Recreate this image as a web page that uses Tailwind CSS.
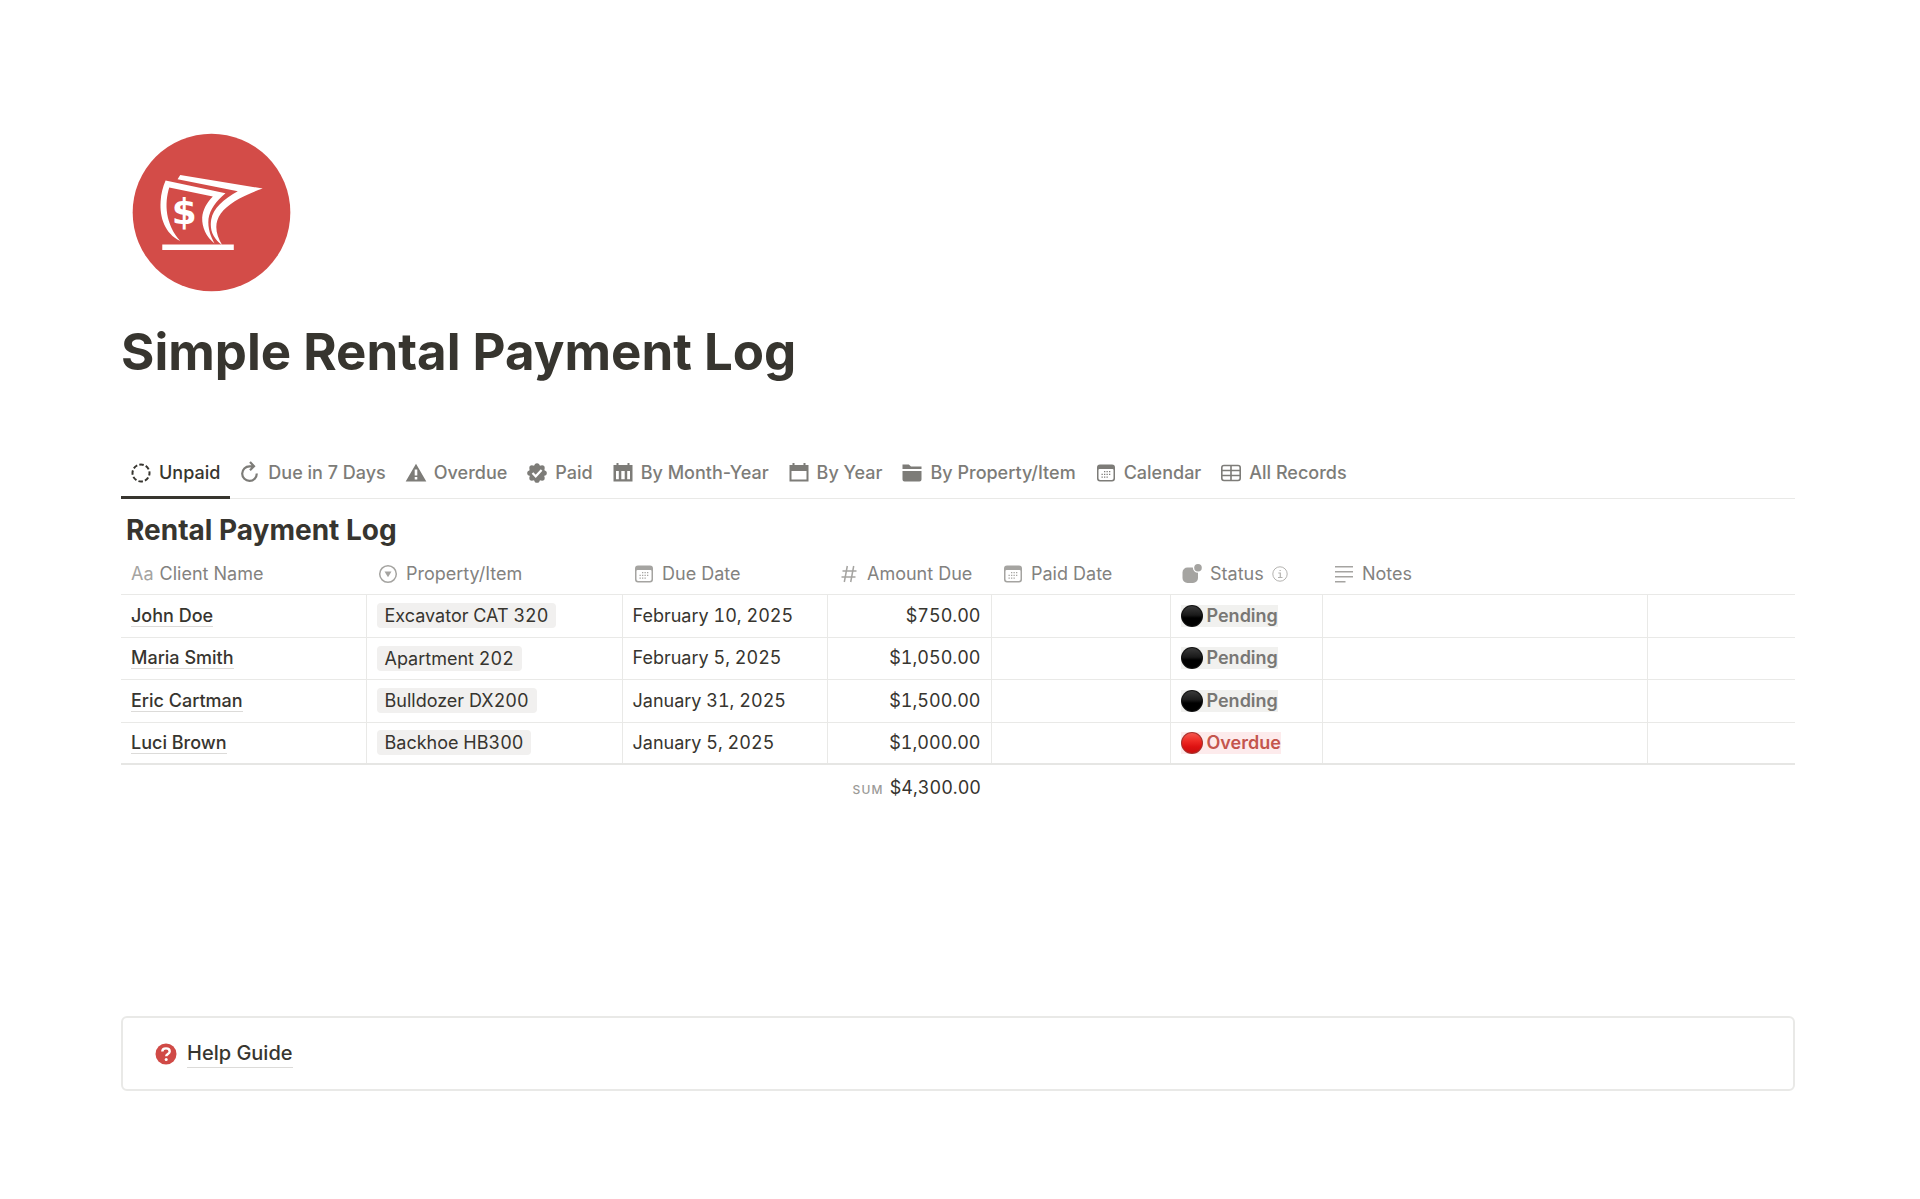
<!DOCTYPE html>
<html lang="en">
<head>
    <meta charset="UTF-8">
    <meta name="viewport" content="width=device-width, initial-scale=1.0">
    <title>Simple Rental Payment Log</title>
    <script src="https://cdn.jsdelivr.net/npm/@tailwindcss/browser@4"></script>
</head>
<body class="bg-white font-['Inter',sans-serif] text-[18px] leading-6 text-[#37352f]">

<!-- Shared icons -->
<svg class="absolute size-0" aria-hidden="true">
    <symbol id="icon-calendar" viewBox="0 0 20 20">
        <path fill-rule="evenodd" fill="currentColor" d="M4 1.500h12A3 3 0 0 1 19 4.500v11a3 3 0 0 1-3 3H4a3 3 0 0 1-3-3v-11a3 3 0 0 1 3-3ZM2.500 7v8.300A1.700 1.700 0 0 0 4.200 17h11.600a1.700 1.700 0 0 0 1.700-1.700V7a1 1 0 0 0-1-1h-13a1 1 0 0 0-1 1Z"/>
        <g fill="currentColor">
            <path d="M8 8h1.300v1.300H8zM10.500 8h1.300v1.300h-1.300zM13 8h1.300v1.300H13zM5.500 10.700h1.300V12H5.500zM8 10.700h1.300V12H8zM10.500 10.700h1.300V12h-1.300zM13 10.700h1.300V12H13zM5.500 13.400h1.300v1.300H5.500zM8 13.400h1.300v1.300H8zM10.500 13.400h1.300v1.300h-1.300z"/>
        </g>
    </symbol>
    <defs>
        <linearGradient id="shade-black" x1="0" y1="0" x2="0" y2="1">
            <stop offset="0" stop-color="#3a3a3a"/>
            <stop offset=".45" stop-color="#1a1a1a"/>
            <stop offset=".6" stop-color="#000"/>
        </linearGradient>
        <linearGradient id="shade-red" x1="0" y1="0" x2="0" y2="1">
            <stop offset="0" stop-color="#f4574f"/>
            <stop offset=".4" stop-color="#ee2a24"/>
            <stop offset=".7" stop-color="#dd1111"/>
            <stop offset="1" stop-color="#c80f0f"/>
        </linearGradient>
    </defs>
    <symbol id="dot-black" viewBox="0 0 22 22">
        <circle cx="11" cy="11" r="11" fill="#111"/>
        <circle cx="11" cy="11" r="10" fill="url(#shade-black)"/>
    </symbol>
    <symbol id="dot-red" viewBox="0 0 22 22">
        <circle cx="11" cy="11" r="11" fill="#a8302c"/>
        <circle cx="11" cy="11" r="10" fill="url(#shade-red)"/>
    </symbol>
</svg>

<main class="pl-[121px] pr-[125px] pt-[133px] pb-[108px]">

    <!-- Page Header -->
    <header>
        <svg class="ml-[11px] size-[159px]" viewBox="66 38 476 478" aria-hidden="true">
            <circle cx="304" cy="277" r="237" fill="#d34c48"/>
            <g fill="#fff">
                <path d="M166 181L346 219C318 242 299 268 295 296C292 325 302 350 313 370C288 350 275 322 276 292C278 268 290 247 308 229L177 202C162 250 165 312 210 363C163 340 148 291 151 244C152 221 158 200 166 181Z"/>
                <path d="M210 164L458 205C400 225 354 250 332 280C311 309 316 342 336 375C309 355 298 330 303 299C309 264 340 237 383 213L202 177Z"/>
                <path d="M156 373H371V390H156Z"/>
                <text x="222" y="311" text-anchor="middle" font-family="DejaVu Sans, sans-serif" font-weight="700" font-size="108">$</text>
            </g>
        </svg>
        <h1 class="mt-7 text-[51px] leading-[64px] font-bold">Simple Rental Payment Log</h1>
    </header>

    <!-- View Tabs -->
    <nav class="mt-[66px] flex border-b border-[#e9e9e7] font-medium text-[#7d7c78]">
        <button class="-mb-px flex h-[49px] items-center gap-2 border-b-3 border-[#37352f] px-2.5 text-[#37352f]">
            <svg class="size-5" viewBox="0 0 20 20" fill="none" stroke="currentColor" stroke-width="2"><circle cx="10" cy="10" r="8.500" stroke-dasharray="4.500 2.180" stroke-dashoffset="2"/></svg>
            Unpaid
        </button>
        <button class="flex h-[46px] items-center gap-2 px-2.5">
            <svg class="size-5 overflow-visible" viewBox="0 0 20 20" fill="none" stroke="currentColor" stroke-width="2.200"><path d="M16.800 10.500A7.300 7.300 0 1 1 9.500 3.300h4M10-1l4 4.200-4 4"/></svg>
            Due in 7 Days
        </button>
        <button class="flex h-[46px] items-center gap-2 px-2.5">
            <svg class="size-5 overflow-visible" viewBox="0 0 20 20" fill="currentColor"><path fill-rule="evenodd" d="M10 .800L20.300 18.500H-.300ZM8.700 6.500v6h2.600v-6ZM8.700 14v2.500h2.600V14Z"/></svg>
            Overdue
        </button>
        <button class="flex h-[46px] items-center gap-2 px-2.5">
            <svg class="size-5" viewBox="0 0 20 20"><g fill="currentColor"><circle cx="10" cy="10" r="8"/><circle cx="10" cy="2.800" r="2.600"/><circle cx="15.100" cy="4.900" r="2.600"/><circle cx="17.200" cy="10" r="2.600"/><circle cx="15.100" cy="15.100" r="2.600"/><circle cx="10" cy="17.200" r="2.600"/><circle cx="4.900" cy="15.100" r="2.600"/><circle cx="2.800" cy="10" r="2.600"/><circle cx="4.900" cy="4.900" r="2.600"/></g><path d="M5.500 10l3.200 3.300L14.600 7" fill="none" stroke="#fff" stroke-width="2.200"/></svg>
            Paid
        </button>
        <button class="flex h-[46px] items-center gap-2 px-2.5">
            <svg class="size-5" viewBox="0 0 20 20" fill="currentColor"><path fill-rule="evenodd" d="M3.500 0h2v2h9V0h2v2h3v16.500H.500V2h3ZM3 8v8.300h2.800V8ZM8.300 8v8.300h3.400V8ZM14.200 8v8.300H17V8Z"/></svg>
            By Month-Year
        </button>
        <button class="flex h-[46px] items-center gap-2 px-2.5">
            <svg class="size-5" viewBox="0 0 20 20" fill="currentColor"><path fill-rule="evenodd" d="M3.500 0h2v2h9V0h2v2h3v16.500H.500V2h3ZM2.500 8v8.500h15V8Z"/></svg>
            By Year
        </button>
        <button class="flex h-[46px] items-center gap-2 px-2.5">
            <svg class="size-5" viewBox="0 0 20 20" fill="currentColor"><path d="M.500 6V1.500h6.300L9 3.500h10.500V6ZM.500 8h19v8.500a2 2 0 0 1-2 2h-15a2 2 0 0 1-2-2Z"/></svg>
            By Property/Item
        </button>
        <button class="flex h-[46px] items-center gap-2 px-2.5">
            <svg class="size-5"><use href="#icon-calendar"/></svg>
            Calendar
        </button>
        <button class="flex h-[46px] items-center gap-2 px-2.5">
            <svg class="size-5" viewBox="0 0 20 20" fill="none" stroke="currentColor" stroke-width="1.600"><rect x=".800" y="2.500" width="18.400" height="15" rx="2.200"/><path d="M1 7.500h18M1 12.500h18M10 2.500v15"/></svg>
            All Records
        </button>
    </nav>

    <!-- Payment Table -->
    <h2 class="mt-[11px] pl-[5px] text-[28px] leading-10 font-bold">Rental Payment Log</h2>
    <table class="w-full table-fixed border-collapse">
        <colgroup>
            <col class="w-[245px]">
            <col class="w-[256px]">
            <col class="w-[205px]">
            <col class="w-[164px]">
            <col class="w-[179px]">
            <col class="w-[152px]">
            <col class="w-[325px]">
            <col>
        </colgroup>
        <thead class="text-left text-[#83827f] [&_th]:px-3 [&_th]:pt-1 [&_th]:font-normal [&_th:first-child]:px-2.5">
            <tr class="h-[44px] border-b border-[#e9e9e7]">
                <th><span class="flex items-center gap-1.5"><span class="text-[#a5a4a1]">Aa</span>Client Name</span></th>
                <th>
                    <span class="flex items-center gap-2">
                        <svg class="size-5 text-[#a5a4a1]" viewBox="0 0 20 20"><circle cx="10" cy="10" r="8.300" fill="none" stroke="currentColor" stroke-width="1.500"/><path d="M6.500 7.500h7L10 13.200Z" fill="currentColor"/></svg>
                        Property/Item
                    </span>
                </th>
                <th>
                    <span class="flex items-center gap-2">
                        <svg class="size-5 text-[#a5a4a1]"><use href="#icon-calendar"/></svg>
                        Due Date
                    </span>
                </th>
                <th>
                    <span class="flex items-center gap-2 whitespace-nowrap">
                        <svg class="size-5 text-[#a5a4a1]" viewBox="0 0 20 20" fill="none" stroke="currentColor" stroke-width="1.500"><path d="M8.300 2L5.300 18M14.700 2l-3 16M3.500 7h14M2.500 13h14"/></svg>
                        Amount Due
                    </span>
                </th>
                <th>
                    <span class="flex items-center gap-2">
                        <svg class="size-5 text-[#a5a4a1]"><use href="#icon-calendar"/></svg>
                        Paid Date
                    </span>
                </th>
                <th>
                    <span class="flex items-center gap-2">
                        <svg class="size-5 text-[#a5a4a1]" viewBox="0 0 20 20" fill="currentColor"><path d="M5.500 3.500h5.300A5.200 5.200 0 0 0 16 8.700V14a5 5 0 0 1-5 5H5.500a5 5 0 0 1-5-5V8.500a5 5 0 0 1 5-5Z"/><circle cx="16" cy="3.800" r="3.800"/></svg>
                        Status
                        <svg class="size-4 text-[#b4b3b0]" viewBox="0 0 16 16" fill="none" stroke="currentColor"><circle cx="8" cy="8" r="7.200"/><path d="M6.300 7h2v4.300M6 11.500h4.500M7.500 4.500h1.300" stroke-width="1.200"/></svg>
                    </span>
                </th>
                <th>
                    <span class="flex items-center gap-2">
                        <svg class="size-5 text-[#a5a4a1]" viewBox="0 0 20 20" stroke="currentColor" stroke-width="1.500"><path d="M1 2.700h18M1 7.700h18M1 12.700h18M1 17.700h10.500"/></svg>
                        Notes
                    </span>
                </th>
                <th></th>
            </tr>
        </thead>
        <tbody class="tabular-nums [&_td]:border-r [&_td]:border-[#e9e9e7] [&_td]:px-2.5 [&_td:last-child]:border-r-0">
            <tr class="h-[43px] border-b border-[#e9e9e7]">
                <td><a href="#" class="border-b border-[#dcdbd9] font-medium">John Doe</a></td>
                <td><span class="block w-fit rounded-[4px] bg-[#f1f0ef] px-2 leading-[25px]">Excavator CAT 320</span></td>
                <td>February 10, 2025</td>
                <td class="text-right">$750.00</td>
                <td></td>
                <td><span class="flex h-[22px] w-fit items-center gap-1 bg-[#f1f1ef] font-semibold text-[#787774]"><svg class="size-[22px]"><use href="#dot-black"/></svg>Pending</span></td>
                <td></td>
                <td></td>
            </tr>
            <tr class="h-[42px] border-b border-[#e9e9e7]">
                <td><a href="#" class="border-b border-[#dcdbd9] font-medium">Maria Smith</a></td>
                <td><span class="block w-fit rounded-[4px] bg-[#f1f0ef] px-2 leading-[25px]">Apartment 202</span></td>
                <td>February 5, 2025</td>
                <td class="text-right">$1,050.00</td>
                <td></td>
                <td><span class="flex h-[22px] w-fit items-center gap-1 bg-[#f1f1ef] font-semibold text-[#787774]"><svg class="size-[22px]"><use href="#dot-black"/></svg>Pending</span></td>
                <td></td>
                <td></td>
            </tr>
            <tr class="h-[43px] border-b border-[#e9e9e7]">
                <td><a href="#" class="border-b border-[#dcdbd9] font-medium">Eric Cartman</a></td>
                <td><span class="block w-fit rounded-[4px] bg-[#f1f0ef] px-2 leading-[25px]">Bulldozer DX200</span></td>
                <td>January 31, 2025</td>
                <td class="text-right">$1,500.00</td>
                <td></td>
                <td><span class="flex h-[22px] w-fit items-center gap-1 bg-[#f1f1ef] font-semibold text-[#787774]"><svg class="size-[22px]"><use href="#dot-black"/></svg>Pending</span></td>
                <td></td>
                <td></td>
            </tr>
            <tr class="h-[42px] border-b-2 border-[#e6e6e4]">
                <td><a href="#" class="border-b border-[#dcdbd9] font-medium">Luci Brown</a></td>
                <td><span class="block w-fit rounded-[4px] bg-[#f1f0ef] px-2 leading-[25px]">Backhoe HB300</span></td>
                <td>January 5, 2025</td>
                <td class="text-right">$1,000.00</td>
                <td></td>
                <td><span class="flex h-[22px] w-fit items-center gap-1 bg-[#fdebec] font-semibold text-[#c4554d]"><svg class="size-[22px]"><use href="#dot-red"/></svg>Overdue</span></td>
                <td></td>
                <td></td>
            </tr>
        </tbody>
        <tfoot>
            <tr class="h-[48px]">
                <td colspan="3"></td>
                <td class="pr-2.5 text-right whitespace-nowrap tabular-nums"><span class="mr-1.5 text-[12px] font-medium tracking-widest text-[#9b9a97]">SUM</span>$4,300.00</td>
                <td colspan="4"></td>
            </tr>
        </tfoot>
    </table>

    <!-- Help -->
    <section class="mt-[204px] flex h-[75px] items-center gap-2.5 rounded-md border-2 border-[#e9e9e7] px-8">
        <svg class="size-[22px]" viewBox="0 0 22 22"><circle cx="11" cy="11" r="10.500" fill="#d04a46"/><path d="M7.300 8.600C7.300 6.500 8.900 5.400 11 5.400s3.700 1.100 3.700 3c0 2.600-3.500 2.400-3.500 4.900" fill="none" stroke="#fff" stroke-width="2.400"/><circle cx="11.200" cy="16.400" r="1.500" fill="#fff"/></svg>
        <a href="#" class="border-b border-[#dcdbd9] text-[20px] font-medium leading-7">Help Guide</a>
    </section>
</main>
</body>
</html>
